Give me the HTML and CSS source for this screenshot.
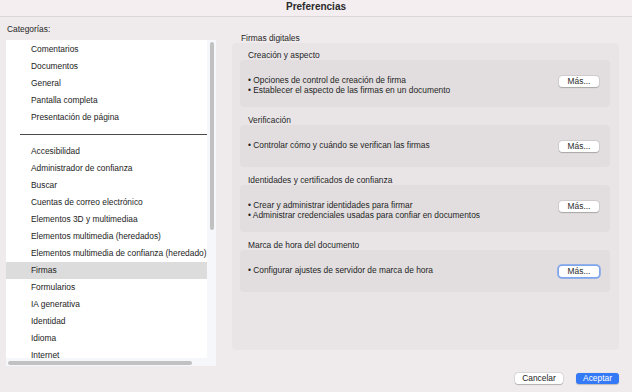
FILE: index.html
```html
<!DOCTYPE html>
<html lang="es">
<head>
<meta charset="utf-8">
<title>Preferencias</title>
<link rel="stylesheet" href="styles.css">
</head>
<body>
<div class="window">
  <header class="titlebar">Preferencias</header>
  <main class="main">
    <section class="left">
      <div class="cat-label">Categorías:</div>
      <div class="listbox">
        <ul class="list">
          <li>Comentarios</li>
          <li>Documentos</li>
          <li>General</li>
          <li>Pantalla completa</li>
          <li>Presentación de página</li>
          <li class="sep"><span></span></li>
          <li>Accesibilidad</li>
          <li>Administrador de confianza</li>
          <li>Buscar</li>
          <li>Cuentas de correo electrónico</li>
          <li>Elementos 3D y multimediaa</li>
          <li>Elementos multimedia (heredados)</li>
          <li>Elementos multimedia de confianza (heredado)</li>
          <li class="selected">Firmas</li>
          <li>Formularios</li>
          <li>IA generativa</li>
          <li>Identidad</li>
          <li>Idioma</li>
          <li>Internet</li>
        </ul>
        <div class="vtrack"><div class="vthumb"></div></div>
        <div class="htrack"><div class="hthumb"></div></div>
      </div>
    </section>
    <section class="right">
      <div class="panel-label">Firmas digitales</div>
      <div class="panel">
        <div class="group">
          <div class="group-label">Creación y aspecto</div>
          <div class="group-box">
            <div class="lines">
              <div>• Opciones de control de creación de firma</div>
              <div>• Establecer el aspecto de las firmas en un documento</div>
            </div>
            <button class="btn">Más...</button>
          </div>
        </div>
        <div class="group">
          <div class="group-label">Verificación</div>
          <div class="group-box">
            <div class="lines">
              <div>• Controlar cómo y cuándo se verifican las firmas</div>
            </div>
            <button class="btn">Más...</button>
          </div>
        </div>
        <div class="group">
          <div class="group-label">Identidades y certificados de confianza</div>
          <div class="group-box">
            <div class="lines">
              <div>• Crear y administrar identidades para firmar</div>
              <div>• Administrar credenciales usadas para confiar en documentos</div>
            </div>
            <button class="btn">Más...</button>
          </div>
        </div>
        <div class="group">
          <div class="group-label">Marca de hora del documento</div>
          <div class="group-box">
            <div class="lines">
              <div>• Configurar ajustes de servidor de marca de hora</div>
            </div>
            <button class="btn focused">Más...</button>
          </div>
        </div>
      </div>
    </section>
  </main>
  <footer class="footer">
    <button class="fbtn">Cancelar</button>
    <button class="fbtn primary">Aceptar</button>
  </footer>
</div>
</body>
</html>
```
FILE: styles.css
```css
* { box-sizing: border-box; }
html, body {
  margin: 0;
  padding: 0;
  width: 632px;
  height: 392px;
  overflow: hidden;
  background: #efebec;
  font-family: "Liberation Sans", Arial, sans-serif;
  font-size: 8.4px;
  color: #1f1f1f;
}
.window {
  width: 632px;
  height: 392px;
  display: flex;
  flex-direction: column;
}
.titlebar {
  height: 17px;
  border-bottom: 1px solid #dcd6d9;
  background: #f4eef1;
  text-align: center;
  font-weight: bold;
  font-size: 10px;
  line-height: 13px;
  color: #2a2a2a;
}
.main {
  display: flex;
  gap: 16px;
  padding: 0 13px 0 6px;
  height: 350px;
}
.left {
  width: 210px;
  padding-top: 7px;
}
.cat-label {
  line-height: 10px;
  padding-left: 1px;
  margin-bottom: 6px;
}
.listbox {
  position: relative;
  height: 326px;
  background: #f6f7fa;
  overflow: hidden;
}
.list {
  list-style: none;
  margin: 0;
  padding: 1px 0 0;
  width: 201px;
  height: 318px;
  background: #ffffff;
  overflow: hidden;
}
.list li {
  height: 17px;
  line-height: 17px;
  padding-left: 25px;
  white-space: nowrap;
  color: #1c1c1c;
}
.list li.selected {
  background: #dcdcdc;
}
.list li.sep {
  display: flex;
  align-items: center;
  padding: 0 0 0 14px;
}
.list li.sep span {
  display: block;
  width: 187px;
  height: 1px;
  background: #4a4a4a;
}
.vtrack {
  position: absolute;
  top: 0;
  right: 0;
  width: 9px;
  height: 318px;
}
.vthumb {
  position: absolute;
  top: 2px;
  left: 3px;
  width: 4px;
  height: 188px;
  border-radius: 2px;
  background: #c1c1c1;
}
.htrack {
  position: absolute;
  left: 0;
  bottom: 0;
  width: 100%;
  height: 8px;
}
.hthumb {
  position: absolute;
  left: 2px;
  top: 3px;
  width: 184px;
  height: 4px;
  border-radius: 2px;
  background: #c1c1c1;
}
.right {
  flex: 1;
  padding-top: 16px;
}
.panel-label {
  line-height: 10px;
  padding-left: 9px;
}
.panel {
  height: 307px;
  background: #e9e5e7;
  border-radius: 4px;
  padding: 7px 9px 0 8px;
}
.group + .group { margin-top: 8px; }
.group-label {
  line-height: 10px;
  padding-left: 8px;
}
.group-box {
  display: flex;
  justify-content: space-between;
  align-items: flex-start;
  min-height: 42px;
  padding: 15px 11px 12px 8px;
  background: #e2dedf;
  border-radius: 4px;
}
.lines div {
  line-height: 10px;
  white-space: nowrap;
}
.btn {
  margin-top: 1px;
  width: 40px;
  height: 11px;
  padding: 0;
  border: none;
  border-radius: 3px;
  background: #ffffff;
  box-shadow: 0 0 0 0.5px rgba(0,0,0,0.12), 0 0.5px 1px rgba(0,0,0,0.2);
  font-family: inherit;
  font-size: 8.4px;
  line-height: 11px;
  color: #2a2a2a;
}
.btn.focused {
  box-shadow: 0 0 0 1.5px #7ea6ef, 0 0 0 2px rgba(80,130,230,0.35);
}
.footer {
  display: flex;
  justify-content: flex-end;
  gap: 13px;
  padding: 6px 13px 0 0;
}
.fbtn {
  height: 11px;
  padding: 0;
  border: none;
  border-radius: 3px;
  background: #ffffff;
  box-shadow: 0 0 0 0.5px rgba(0,0,0,0.12), 0 0.5px 1px rgba(0,0,0,0.2);
  font-family: inherit;
  font-size: 8.4px;
  line-height: 11px;
  color: #222;
  width: 48px;
}
.fbtn.primary {
  width: 43px;
  background: #3479f6;
  color: #ffffff;
  box-shadow: 0 0.5px 1px rgba(0,0,0,0.2);
}
```
